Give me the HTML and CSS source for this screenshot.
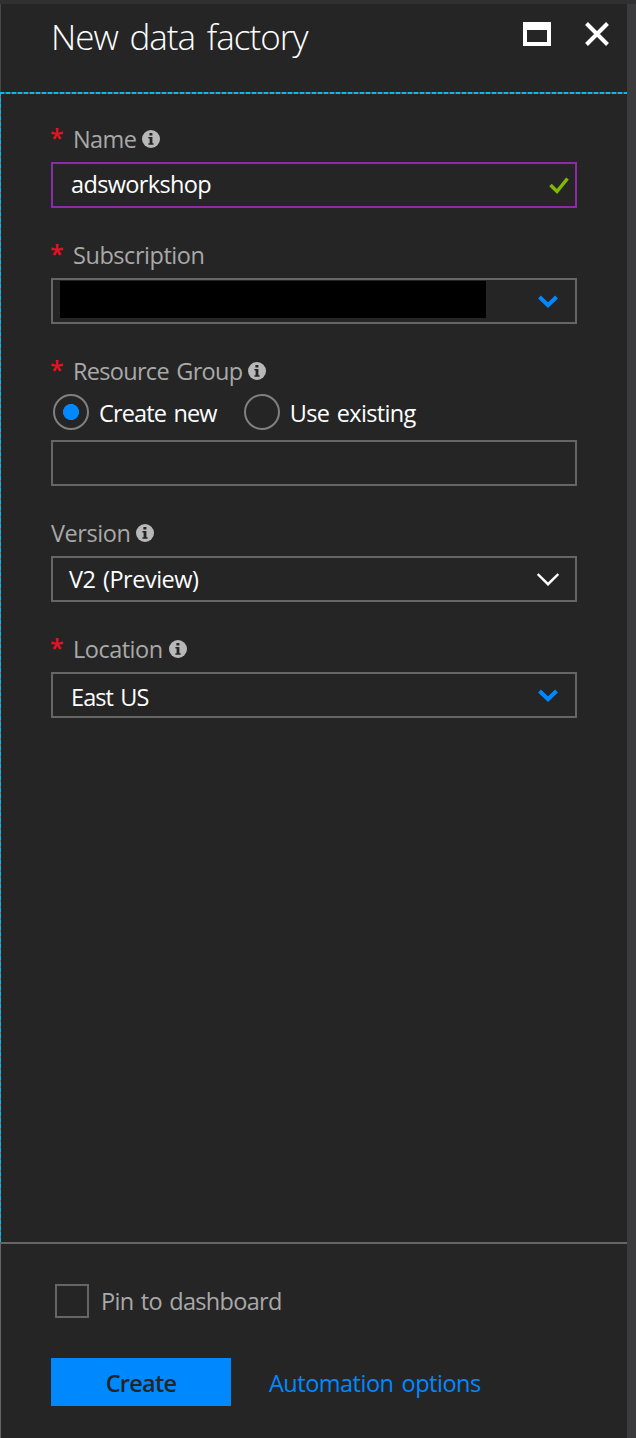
FILE: index.html
```
<!DOCTYPE html>
<html lang="en">
<head>
<meta charset="utf-8">
<title>New data factory</title>
<link rel="stylesheet" href="styles.css">
</head>
<body>
<svg class="defs" width="0" height="0">
  <symbol id="info" viewBox="0 0 18 18"><circle cx="9" cy="9" r="9" fill="#b8b8b8"/><path fill="#252525" d="M7.400 3h3v2.600h-3zM6.400 7h4v6.200h1.200v1.600H6.400v-1.600h1.200V8.600H6.400z"/></symbol>
  <symbol id="chevron" viewBox="0 0 20 14"><path d="M1.500 2 10 10.300 18.500 2" fill="none" stroke="#0089ff" stroke-width="4"/></symbol>
</svg>
<div class="blade">
  <header class="header">
    <h1 class="title">New data factory</h1>
    <div class="actions">
      <svg width="28" height="24" viewBox="0 0 28 24"><path fill="#fff" fill-rule="evenodd" d="M0 0h28v24H0zM4 8v12h20V8z"/></svg>
      <svg width="24" height="24" viewBox="0 0 24 24"><path d="M1.500 1.500l21 21M22.500 1.500l-21 21" stroke="#fff" stroke-width="4"/></svg>
    </div>
  </header>
  <main class="content">
    <section class="field">
      <div class="label"><span class="star">*</span><span class="t-name">Name</span><svg class="info"><use href="#info"/></svg></div>
      <div class="box box-active"><span class="t-value">adsworkshop</span><svg class="check" width="20" height="18" viewBox="0 0 20 18"><path d="M1.500 8 8 14.500 18.500 1.500" fill="none" stroke="#7fba00" stroke-width="3.500"/></svg></div>
    </section>
    <section class="field">
      <div class="label"><span class="star">*</span><span class="t-sub">Subscription</span></div>
      <div class="box box-redacted"><span class="redacted"></span><svg class="arrow"><use href="#chevron"/></svg></div>
    </section>
    <section class="field">
      <div class="label"><span class="star">*</span><span class="t-group">Resource Group</span><svg class="info"><use href="#info"/></svg></div>
      <div class="radios">
        <span class="radio radio-on"></span><span class="t-new">Create new</span>
        <span class="radio radio-second"></span><span class="t-existing">Use existing</span>
      </div>
      <div class="box"></div>
    </section>
    <section class="field">
      <div class="label"><span class="t-version">Version</span><svg class="info"><use href="#info"/></svg></div>
      <div class="box box-version"><span class="t-v2">V2 (Preview)</span><svg class="thin" width="22" height="13" viewBox="0 0 22 13"><path d="M.7 1 11 11.200 21.300 1" fill="none" stroke="#fff" stroke-width="2.400"/></svg></div>
    </section>
    <section class="field">
      <div class="label"><span class="star">*</span><span class="t-location">Location</span><svg class="info"><use href="#info"/></svg></div>
      <div class="box box-location"><span class="t-east">East US</span><svg class="arrow arrow-up"><use href="#chevron"/></svg></div>
    </section>
  </main>
  <footer class="footer">
    <div class="pin"><span class="checkbox"></span><span class="t-pin">Pin to dashboard</span></div>
    <div class="buttons"><button class="create">Create</button><a class="t-auto">Automation options</a></div>
  </footer>
</div>
</body>
</html>
```
FILE: styles.css
```
* { box-sizing: border-box; }
body {
  margin: 0;
  height: 1438px;
  padding: 4px 9px 0 0;
  background: linear-gradient(#303030 4px, transparent 4px), #3b3b3d;
  color: #fff;
  font: 23.5px/32px "Open Sans", "Noto Sans", sans-serif;
  white-space: nowrap;
  overflow: hidden;
}
.defs { display: block; height: 0; }
.blade { display: flex; flex-direction: column; height: 1434px; background: #252525; }
.header {
  display: flex;
  justify-content: space-between;
  height: 88px;
  padding: 9px 18px 0 50px;
  border-left: 1px solid #474747;
}
.title { margin: 0; font-size: 35px; line-height: 48px; font-weight: 300; letter-spacing: -.98px; word-spacing: 3.5px; }
.actions { display: flex; gap: 34px; padding-top: 9px; }
.content {
  height: 1150px;
  padding: 31px 50px 0 51px;
  background:
    repeating-linear-gradient(90deg, #00bcf2 0 4px, #555 4px 6px) 0 0 / 100% 2px no-repeat,
    repeating-linear-gradient(#00bcf2 0 4px, #777 4px 6px) 0 0 / 1px 100% no-repeat;
}
.field { margin-bottom: 31px; }
.label { display: flex; height: 39px; color: #a9a9a9; }
.star { width: 22px; color: #e81123; font-size: 25px; line-height: 28px; font-weight: 600; text-indent: -1px; }
.info { width: 18px; height: 18px; margin: 7px 0 0 6px; }
.box {
  display: flex;
  align-items: center;
  justify-content: space-between;
  height: 46px;
  padding: 0 17px 0 18px;
  border: 2px solid #666;
}
.box-active { border-color: #8a2da5; padding: 0 6px 2px 18px; }
.check { margin-top: 4px; }
.box-redacted { padding-left: 7px; }
.redacted { width: 426px; height: 37px; margin-bottom: 3px; background: #000; }
.arrow { width: 20px; height: 14px; margin-top: 1px; }
.arrow-up { margin-top: -2px; }
.box-version { padding: 0 16px 0 16px; }
.box-location { padding-top: 3px; }
.radios { display: flex; align-items: center; height: 36px; margin-bottom: 10px; padding-left: 2px; }
.radio { width: 36px; height: 36px; margin-right: 10px; border: 2px solid #808080; border-radius: 50%; }
.radio-on { background: radial-gradient(circle, #0089ff 7.7px, transparent 8.300px); }
.radio-second { margin-left: 27px; }
.footer { flex: 1; padding: 40px 0 0 50px; border-top: 2px solid #666; border-left: 1px solid #666; }
.pin { display: flex; align-items: center; gap: 12px; height: 34px; padding-left: 4px; color: #a9a9a9; }
.checkbox { width: 34px; height: 34px; border: 2px solid #666; }
.buttons { display: flex; align-items: center; gap: 38px; margin-top: 40px; }
.create {
  width: 180px;
  height: 48px;
  padding: 2px 0 0;
  border: 0;
  background: #0089ff;
  color: #252525;
  font: inherit;
  font-weight: 600;
  letter-spacing: -.75px;
}
.t-name { letter-spacing: -.6px; }
.t-value { letter-spacing: -.65px; }
.t-sub { letter-spacing: -.45px; }
.t-group { letter-spacing: -.7px; word-spacing: 2px; }
.t-new { padding-top: 2px; letter-spacing: -.85px; word-spacing: 2px; }
.t-existing { padding-top: 2px; letter-spacing: -.65px; word-spacing: 2px; }
.t-version { letter-spacing: -.45px; }
.t-v2 { letter-spacing: -.5px; word-spacing: 2px; }
.t-location { letter-spacing: -.5px; }
.t-east { letter-spacing: -.9px; word-spacing: 2px; }
.t-pin { letter-spacing: -.7px; word-spacing: 2px; }
.t-auto { padding-top: 2px; color: #0089ff; letter-spacing: -.5px; word-spacing: 2.5px; }
```
